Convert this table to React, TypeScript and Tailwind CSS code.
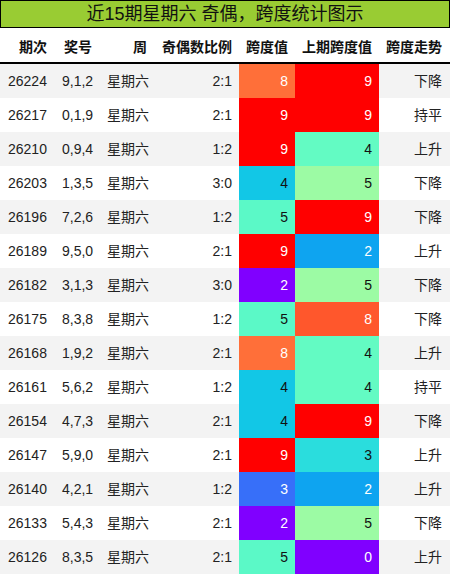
import React from "react";

const rows: [string, string, string, string, number, number, string][] = [
  ["26224", "9,1,2", "星期六", "2:1", 8, 9, "下降"],
  ["26217", "0,1,9", "星期六", "2:1", 9, 9, "持平"],
  ["26210", "0,9,4", "星期六", "1:2", 9, 4, "上升"],
  ["26203", "1,3,5", "星期六", "3:0", 4, 5, "下降"],
  ["26196", "7,2,6", "星期六", "1:2", 5, 9, "下降"],
  ["26189", "9,5,0", "星期六", "2:1", 9, 2, "上升"],
  ["26182", "3,1,3", "星期六", "3:0", 2, 5, "下降"],
  ["26175", "8,3,8", "星期六", "1:2", 5, 8, "下降"],
  ["26168", "1,9,2", "星期六", "2:1", 8, 4, "上升"],
  ["26161", "5,6,2", "星期六", "1:2", 4, 4, "持平"],
  ["26154", "4,7,3", "星期六", "2:1", 4, 9, "下降"],
  ["26147", "5,9,0", "星期六", "2:1", 9, 3, "上升"],
  ["26140", "4,2,1", "星期六", "1:2", 3, 2, "上升"],
  ["26133", "5,4,3", "星期六", "2:1", 2, 5, "下降"],
  ["26126", "8,3,5", "星期六", "2:1", 5, 0, "上升"],
];

function rainbow(x: number): [number, number, number] {
  const r = Math.min(1, Math.abs(2 * x - 0.5));
  const g = Math.sin(Math.PI * x);
  const b = Math.cos((Math.PI * x) / 2);
  return [Math.round(r * 255), Math.round(Math.max(0, g) * 255), Math.round(Math.max(0, b) * 255)];
}

function cellStyle(v: number, min: number, max: number): React.CSSProperties {
  const [r, g, b] = rainbow((v - min) / (max - min));
  return {
    backgroundColor: `rgb(${r},${g},${b})`,
    color: g > 180 ? "#111111" : "#ffffff",
  };
}

const font = { fontFamily: '"Liberation Sans", "Noto Sans CJK SC", sans-serif' };

export default function App() {
  return (
    <div className="w-[450px] h-[575px] bg-white overflow-hidden text-[#222]" style={font}>
      <div className="h-[28px] bg-[#99cc33] border border-black flex items-center justify-center text-[18px] leading-none text-[#111]">
        近15期星期六 奇偶，跨度统计图示
      </div>
      <div className="h-[36px] flex items-center pt-[4px] text-[14px] font-bold text-[#111] border-b-2 border-black">
        <div className="w-[54px] text-right pr-[7px]">期次</div>
        <div className="w-[45px] text-right pr-[7px]">奖号</div>
        <div className="w-[56px] text-right pr-[8px]">周</div>
        <div className="w-[84px] text-right pr-[7px]">奇偶数比例</div>
        <div className="w-[56px] text-right pr-[7px]">跨度值</div>
        <div className="w-[84px] text-right pr-[7px]">上期跨度值</div>
        <div className="w-[71px] text-right pr-[8px]">跨度走势</div>
      </div>
      {rows.map((r, i) => (
        <div
          key={r[0]}
          className={`h-[34px] flex items-stretch text-[14px] ${i % 2 === 0 ? "bg-[#f3f3f3]" : "bg-white"}`}
        >
          <div className="w-[54px] flex items-center pl-[8px]">{r[0]}</div>
          <div className="w-[45px] flex items-center pl-[8px]">{r[1]}</div>
          <div className="w-[56px] flex items-center pl-[8px]">{r[2]}</div>
          <div className="w-[84px] flex items-center justify-end pr-[7px]">{r[3]}</div>
          <div className="w-[56px] flex items-center justify-end pr-[7px]" style={cellStyle(r[4], 2, 9)}>
            {r[4]}
          </div>
          <div className="w-[84px] flex items-center justify-end pr-[7px]" style={cellStyle(r[5], 0, 9)}>
            {r[5]}
          </div>
          <div className="w-[71px] flex items-center justify-end pr-[8px]">{r[6]}</div>
        </div>
      ))}
    </div>
  );
}
